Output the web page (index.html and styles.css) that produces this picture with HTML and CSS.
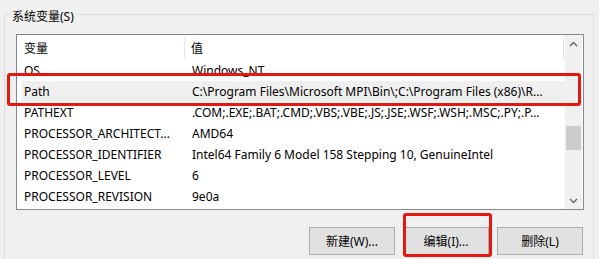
FILE: index.html
```html
<!DOCTYPE html>
<html lang="zh-CN">
<head>
	<meta charset="UTF-8">
	<title>系统变量</title>
	<link rel="stylesheet" href="styles.css">
</head>
<body>
	<div class="page">
		<div class="group">
			<div class="group-title">系统变量(S)</div>
			<div class="listbox">
				<div class="table">
					<div class="head">
						<div class="hcell name">变量</div>
						<div class="hcell value">值</div>
					</div>
					<div class="row"><span>OS</span><span>Windows_NT</span></div>
					<div class="row selected"><span>Path</span><span>C:\Program Files\Microsoft MPI\Bin\;C:\Program Files (x86)\R...</span></div>
					<div class="row"><span>PATHEXT</span><span>.COM;.EXE;.BAT;.CMD;.VBS;.VBE;.JS;.JSE;.WSF;.WSH;.MSC;.PY;.P...</span></div>
					<div class="row"><span>PROCESSOR_ARCHITECT...</span><span>AMD64</span></div>
					<div class="row"><span>PROCESSOR_IDENTIFIER</span><span>Intel64 Family 6 Model 158 Stepping 10, GenuineIntel</span></div>
					<div class="row"><span>PROCESSOR_LEVEL</span><span>6</span></div>
					<div class="row"><span>PROCESSOR_REVISION</span><span>9e0a</span></div>
				</div>
				<div class="scrollbar">
					<div class="sb-btn">
						<svg width="9" height="6" viewBox="0 0 9 6"><polyline points="1,5 4.5,1.5 8,5" fill="none" stroke="#606060" stroke-width="1.3"/></svg>
					</div>
					<div class="sb-track"><div class="sb-thumb"></div></div>
					<div class="sb-btn">
						<svg width="9" height="6" viewBox="0 0 9 6"><polyline points="1,1 4.5,4.5 8,1" fill="none" stroke="#606060" stroke-width="1.3"/></svg>
					</div>
				</div>
			</div>
			<div class="buttons">
				<button class="btn">新建(W)...</button>
				<button class="btn">编辑(I)...</button>
				<button class="btn">删除(L)</button>
			</div>
		</div>
		<div class="mark mark-row"></div>
		<div class="mark mark-btn"></div>
	</div>
</body>
</html>
```

FILE: styles.css
```css
* {
	margin: 0;
	padding: 0;
	box-sizing: border-box;
}
body {
	background-color: #f0f0f0;
	color: #000;
	font-family: "Noto Sans", "Noto Sans CJK SC", sans-serif;
	font-size: 12px;
	overflow: hidden;
}
.page {
	position: relative;
	width: 599px;
	height: 259px;
	padding: 14px 0 0 4px;
}
.group {
	position: relative;
	width: 590px;
	height: 245px;
	border: 1px solid #dcdcdc;
	border-bottom: none;
	padding: 19px 0 0 11px;
}
.group-title {
	position: absolute;
	left: 5px;
	top: -6px;
	padding: 0 2px;
	line-height: 16px;
	background-color: #f0f0f0;
}
.listbox {
	display: flex;
	width: 568px;
	height: 176px;
	border: 1px solid #828790;
	background-color: #fff;
}
.table {
	width: 548px;
}
.head {
	display: flex;
	height: 25px;
	align-items: stretch;
}
.hcell {
	display: flex;
	align-items: center;
	margin: 2px 0 1px;
	border-right: 1px solid #e5e5e5;
}
.hcell.name {
	width: 168px;
	padding-left: 7px;
}
.hcell.value {
	width: 379px;
	padding-left: 6px;
}
.row {
	display: grid;
	grid-template-columns: 170px 1fr;
	height: 21px;
	line-height: 21px;
	margin: 0 0 0 5px;
	white-space: nowrap;
}
.row span {
	overflow: hidden;
}
.row span:first-child {
	padding-left: 2px;
}
.row.selected {
	background-color: #efefef;
}
.scrollbar {
	display: flex;
	flex-direction: column;
	width: 17px;
	background-color: #f0f0f0;
}
.sb-btn {
	height: 17px;
	display: flex;
	align-items: center;
	justify-content: center;
}
.sb-track {
	flex: 1;
	padding: 74px 1px 0;
}
.sb-thumb {
	height: 24px;
	background-color: #cdcdcd;
}
.buttons {
	display: flex;
	justify-content: flex-end;
	gap: 8px;
	width: 567px;
	margin-top: 17px;
}
.btn {
	width: 86px;
	height: 28px;
	font-family: "Noto Sans", "Noto Sans CJK SC", sans-serif;
	font-size: 12px;
	color: #000;
	background-color: #e1e1e1;
	border: 1px solid #adadad;
}
.mark {
	position: absolute;
	border: 3px solid #e5170f;
	border-radius: 3px;
}
.mark-row {
	left: 7px;
	top: 73px;
	width: 574px;
	height: 33px;
}
.mark-btn {
	left: 403px;
	top: 213px;
	width: 89px;
	height: 44px;
}
```
